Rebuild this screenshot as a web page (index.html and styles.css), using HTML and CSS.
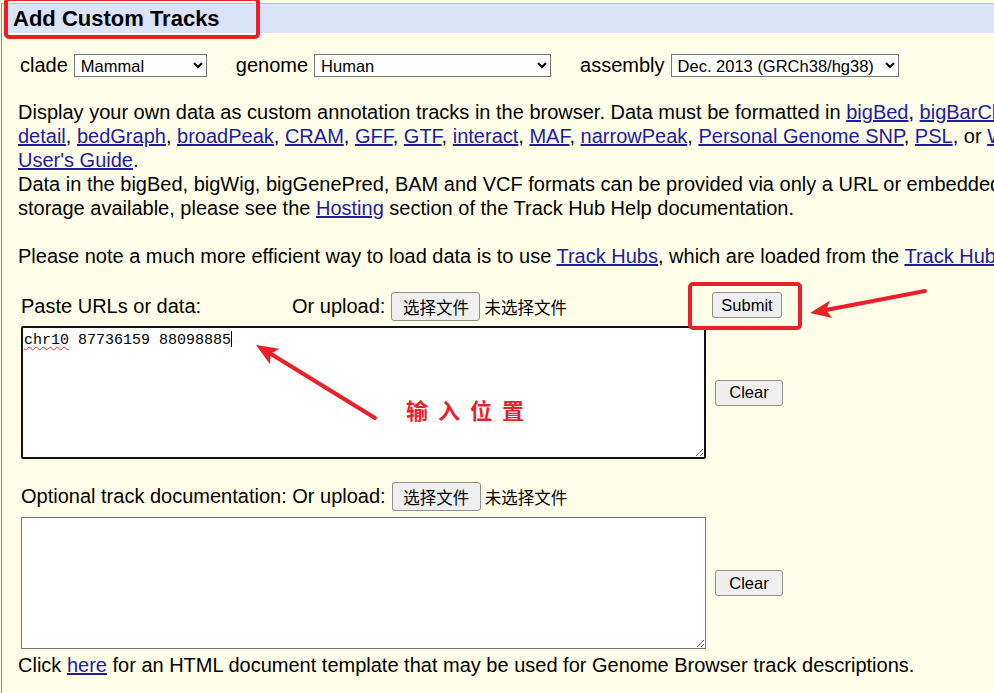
FILE: index.html
```html
<!DOCTYPE html>
<html lang="en">
<head>
<meta charset="utf-8">
<title>Add Custom Tracks</title>
<link rel="stylesheet" href="styles.css">
</head>
<body>
<div class="frame">
  <div class="title">Add Custom Tracks</div>

  <div class="db-row">
    <label class="db-group">clade
      <select class="sel sel-clade"><option>Mammal</option></select>
    </label>
    <label class="db-group">genome
      <select class="sel sel-genome"><option>Human</option></select>
    </label>
    <label class="db-group">assembly
      <select class="sel sel-assembly"><option>Dec. 2013 (GRCh38/hg38)</option></select>
    </label>
  </div>

  <div class="intro">
    <div class="line">Display your own data as custom annotation tracks in the browser. Data must be formatted in <a href="#">bigBed</a>, <a href="#">bigBarChart</a>, <a href="#">bigChain</a>, <a href="#">bigGenePred</a>, <a href="#">bigInteract</a>, <a href="#">BED</a>, <a href="#">BED</a></div>
    <div class="line"><a href="#">detail</a>, <a href="#">bedGraph</a>, <a href="#">broadPeak</a>, <a href="#">CRAM</a>, <a href="#">GFF</a>, <a href="#">GTF</a>, <a href="#">interact</a>, <a href="#">MAF</a>, <a href="#">narrowPeak</a>, <a href="#">Personal Genome SNP</a>, <a href="#">PSL</a>, or <a href="#">WIG</a> formats. To configure the display, set track and browser line attributes as described in the</div>
    <div class="line"><a href="#">User's Guide</a>.</div>
    <div class="line">Data in the bigBed, bigWig, bigGenePred, BAM and VCF formats can be provided via only a URL or embedded in a track hub. For information on the</div>
    <div class="line">storage available, please see the <a href="#">Hosting</a> section of the Track Hub Help documentation.</div>
    <div class="line">&nbsp;</div>
    <div class="line">Please note a much more efficient way to load data is to use <a href="#">Track Hubs</a>, which are loaded from the <a href="#">Track Hubs Portal</a> found in the menu under My Data.</div>
  </div>

  <div class="upload">
    <div class="upload-head">
      <span class="upload-label">Paste URLs or data:</span>
      <span>Or upload:</span>
      <button class="btn file-btn" type="button">选择文件</button>
      <span class="no-file">未选择文件</span>
    </div>
    <button class="btn submit-btn" type="button">Submit</button>

    <div class="textbox focused" role="textbox"><span class="misspelt">chr10</span> 87736159 88098885<span class="caret"></span></div>
    <button class="btn clear-btn clear-data" type="button">Clear</button>
  </div>

  <div class="upload upload-doc">
    <div class="upload-head">
      <span>Optional track documentation: Or upload:</span>
      <button class="btn file-btn" type="button">选择文件</button>
      <span class="no-file">未选择文件</span>
    </div>
    <div></div>

    <textarea class="textbox doc-box"></textarea>
    <button class="btn clear-btn clear-doc" type="button">Clear</button>
  </div>

  <div class="footnote">Click <a href="#">here</a> for an HTML document template that may be used for Genome Browser track descriptions.</div>
</div>

<svg class="marks" width="994" height="693" viewBox="0 0 994 693" aria-hidden="true">
  <rect x="6" y="-1" width="252" height="38" rx="3" fill="none" stroke="#EA1F29" stroke-width="4"/>
  <rect x="690" y="284" width="110" height="44" rx="3" fill="none" stroke="#EA1F29" stroke-width="4"/>
  <line x1="375" y1="418" x2="271" y2="354" stroke="#EA1F29" stroke-width="4" stroke-linecap="round"/>
  <polygon points="256,345 279.4,348.8 270.5,353.9 270,364.2" fill="#EA1F29"/>
  <line x1="925" y1="291" x2="826" y2="310" stroke="#EA1F29" stroke-width="4" stroke-linecap="round"/>
  <polygon points="810,313 830,300.5 826,310 832,318" fill="#EA1F29"/>
</svg>
<div class="note">输入位置</div>
</body>
</html>
```

FILE: styles.css
```css
html, body {
  margin: 0;
  padding: 0;
}

body {
  background: #FFFEE8;
  font-family: "Liberation Sans", Arial, "Noto Sans CJK SC", sans-serif;
  font-size: 20px;
  color: #000;
  width: 994px;
  height: 693px;
  overflow: hidden;
  position: relative;
}

a {
  color: #1d1d9e;
  text-decoration: underline;
}

.frame {
  margin: 3px 0 0 1px;
  border-left: 1px solid #8a8a8a;
  border-top: 1px solid #cdbf98;
  width: 1600px;
  min-height: 700px;
}

.title {
  margin-left: 1px;
  height: 29px;
  line-height: 29px;
  background: #D9E4F8;
  font-weight: bold;
  font-size: 22px;
  padding-left: 10px;
}

.db-row {
  display: flex;
  align-items: center;
  margin-top: 21px;
  padding-left: 18px;
  height: 23px;
}

.db-group {
  display: flex;
  align-items: center;
  margin-right: 29px;
}

.sel {
  margin-left: 6px;
  height: 23px;
  font-family: "Liberation Sans", Arial, sans-serif;
  font-size: 16.5px;
  color: #000;
  background: #fff;
  border: 1px solid #767676;
  border-radius: 0;
  padding: 0 2px;
}

.sel-clade { width: 133px; }
.sel-genome { width: 237px; }
.sel-assembly { width: 228px; }

.intro {
  margin-top: 23px;
  padding-left: 16px;
  line-height: 24px;
}

.line {
  white-space: nowrap;
  height: 24px;
}

.upload {
  display: grid;
  grid-template-columns: 685px auto;
  column-gap: 9px;
  align-items: center;
  margin-top: 24px;
  padding-left: 19px;
  width: 800px;
}

.upload-doc {
  margin-top: 23px;
}

.upload-head {
  display: flex;
  align-items: center;
  height: 29px;
  white-space: nowrap;
}

.upload-label {
  width: 271px;
}

.btn {
  font-family: "Liberation Sans", Arial, "Noto Sans CJK SC", sans-serif;
  font-size: 16.5px;
  color: #000;
  background: #EFEFEF;
  border: 1px solid #8f8f8f;
  border-radius: 3px;
  padding: 0;
}

.file-btn {
  width: 89px;
  height: 29px;
  margin-left: 6px;
  font-family: "Noto Sans CJK SC", sans-serif;
}

.no-file {
  margin-left: 4px;
  font-family: "Noto Sans CJK SC", sans-serif;
  font-size: 16.5px;
}

.submit-btn {
  width: 70px;
  height: 26px;
  margin-left: -3px;
  align-self: start;
  justify-self: start;
}

.clear-btn {
  width: 68px;
  height: 26px;
  justify-self: start;
}

.clear-data {
  margin-top: 5px;
}

.clear-doc {
  margin-top: 6px;
}

.textbox {
  box-sizing: border-box;
  width: 685px;
  margin-top: 5px;
  background: #fff;
  font-family: "Liberation Mono", "Courier New", monospace;
  font-size: 15px;
  line-height: 18px;
  padding: 3px 1px;
  resize: both;
  overflow: auto;
}

.focused {
  height: 133px;
  border: 2px solid #111;
  border-radius: 2px;
}

.doc-box {
  display: block;
  height: 132px;
  margin-top: 6px;
  border: 1px solid #767676;
  border-radius: 0;
}

.misspelt {
  text-decoration: underline wavy #e03030;
  text-decoration-thickness: 1px;
  text-underline-offset: 2px;
}

.caret {
  display: inline-block;
  width: 1px;
  height: 16px;
  background: #000;
  vertical-align: -3px;
}

.footnote {
  margin-top: 4px;
  padding-left: 16px;
  line-height: 24px;
  white-space: nowrap;
}

.marks {
  position: absolute;
  left: 0;
  top: 0;
  pointer-events: none;
}

.note {
  position: absolute;
  left: 406px;
  top: 394px;
  color: #EA1F29;
  font-family: "Noto Sans CJK SC", sans-serif;
  font-weight: bold;
  font-size: 22px;
  letter-spacing: 10px;
  line-height: 30px;
  white-space: nowrap;
}
```
